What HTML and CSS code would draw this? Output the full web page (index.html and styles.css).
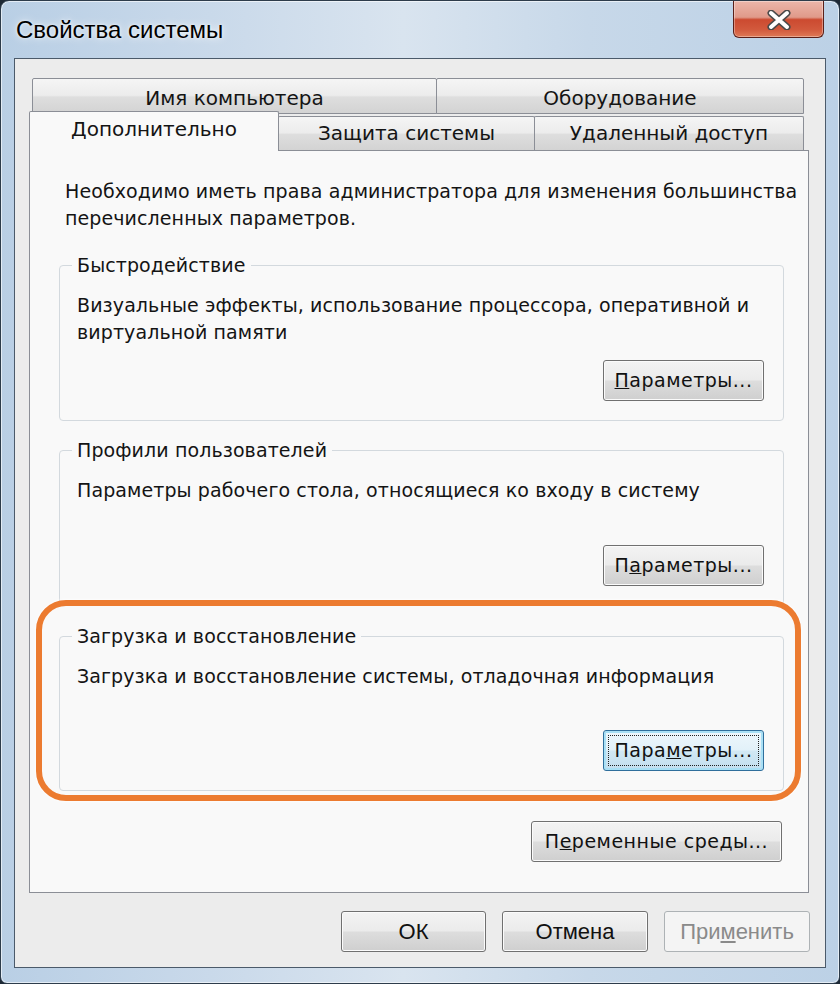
FILE: index.html
```html
<!DOCTYPE html>
<html lang="ru">
<head>
<meta charset="utf-8">
<title>Свойства системы</title>
<link rel="stylesheet" href="styles.css">
</head>
<body>
<div class="window">
  <div class="titlebar">
    <span class="title">Свойства системы</span>
    <div class="close">
      <svg width="24" height="20" viewBox="0 0 24 20">
        <path d="M4 3 L20 17 M20 3 L4 17" stroke="#4a4a4a" stroke-width="7" stroke-linecap="round"/>
        <path d="M4 3 L20 17 M20 3 L4 17" stroke="#ffffff" stroke-width="4" stroke-linecap="round"/>
      </svg>
    </div>
  </div>
  <div class="client">
    <div class="tabrow back">
      <div class="tab t-name">Имя компьютера</div>
      <div class="tab t-hw">Оборудование</div>
    </div>
    <div class="tabrow front">
      <div class="tab sel">Дополнительно</div>
      <div class="tab t-prot">Защита системы</div>
      <div class="tab t-remote">Удаленный доступ</div>
    </div>
    <div class="panel">
      <p class="intro">Необходимо иметь права администратора для изменения большинства<br>перечисленных параметров.</p>
      <div class="group g1">
        <span class="legend">Быстродействие</span>
        <p class="desc">Визуальные эффекты, использование процессора, оперативной и<br>виртуальной памяти</p>
        <div class="btn param"><span><u>П</u>араметры...</span></div>
      </div>
      <div class="group g2">
        <span class="legend">Профили пользователей</span>
        <p class="desc">Параметры рабочего стола, относящиеся ко входу в систему</p>
        <div class="btn param"><span>П<u>а</u>раметры...</span></div>
      </div>
      <div class="group g3">
        <span class="legend">Загрузка и восстановление</span>
        <p class="desc">Загрузка и восстановление системы, отладочная информация</p>
        <div class="btn param focus"><span>Пара<u>м</u>етры...</span></div>
      </div>
      <div class="env-row">
        <div class="btn env"><span>П<u>е</u>ременные среды...</span></div>
      </div>
    </div>
    <div class="actions">
      <div class="btn big ok">ОК</div>
      <div class="btn big cancel">Отмена</div>
      <div class="btn big apply disabled">При<u>м</u>енить</div>
    </div>
  </div>
  <div class="highlight"></div>
</div>
</body>
</html>
```
FILE: styles.css
```css
* { box-sizing: border-box; }
html, body { margin: 0; padding: 0; }
body {
  width: 840px;
  height: 984px;
  overflow: hidden;
  background: #1d2935;
  font-family: "DejaVu Sans", sans-serif;
  color: #141414;
}
p { margin: 0; }

.window {
  position: relative;
  width: 840px;
  height: 984px;
  border: 1px solid #2d3c4b;
  border-radius: 9px 9px 7px 7px;
  background: linear-gradient(90deg, #b9cfe5 0%, #c9d9ea 25%, #d9e4ef 48%, #c7d8e9 70%, #bcd1e6 100%);
  box-shadow: inset 0 0 0 1px rgba(255, 255, 255, 0.6);
  display: flex;
  flex-direction: column;
}

.titlebar {
  height: 57px;
  display: flex;
  align-items: flex-start;
  padding-left: 15px;
  flex: none;
}
.title {
  font-family: "Liberation Sans", sans-serif;
  font-size: 24px;
  line-height: 24px;
  margin-top: 17px;
  color: #000;
  text-shadow: 0 0 8px rgba(255, 255, 255, 0.9), 0 0 3px rgba(255, 255, 255, 0.8);
}
.close {
  margin-left: auto;
  margin-right: 15px;
  width: 91px;
  height: 37px;
  border: 1px solid #5b2019;
  border-top: none;
  border-radius: 0 0 6px 6px;
  background: linear-gradient(180deg, #ecb6aa 0%, #e09a8a 45%, #cc4a30 52%, #d25a3d 80%, #df7a56 100%);
  box-shadow: inset 0 0 0 1px rgba(255, 255, 255, 0.35);
  display: flex;
  align-items: center;
  justify-content: center;
  padding-top: 1px;
}

.client {
  margin: 0 13px;
  height: 910px;
  flex: none;
  border: 1px solid #4b5a6a;
  background: #ececec;
  padding: 19px 15px 0 14px;
  display: flex;
  flex-direction: column;
}

.tabrow { display: flex; flex: none; }
.tabrow.back { margin-left: 3px; height: 36px; }
.tabrow.front { margin-top: -3px; height: 39px; align-items: flex-end; }

.tab {
  border: 1px solid #8b8e96;
  border-radius: 2px 2px 0 0;
  background: linear-gradient(180deg, #f5f5f5 0%, #ececec 48%, #dedede 53%, #d3d3d3 100%);
  font-size: 20px;
  line-height: 24px;
  display: flex;
  align-items: center;
  justify-content: center;
  white-space: nowrap;
}
.back .tab { height: 36px; padding-top: 4px; }
.t-name { width: 405px; }
.t-hw { width: 368px; margin-left: -1px; }
.front .tab { height: 34px; border-bottom: none; padding-bottom: 2px; }
.front .tab.sel {
  width: 250px;
  height: 40px;
  margin-bottom: -1px;
  background: #f9f9f9;
  position: relative;
  z-index: 2;
  padding-bottom: 5px;
}
.t-prot { width: 257px; margin-left: -1px; }
.t-remote { width: 270px; margin-left: -1px; }

.panel {
  width: 780px;
  height: 743px;
  flex: none;
  border: 1px solid #8b8e96;
  background: #f9f9f9;
  padding: 27px 0 0 29px;
}
.intro, .desc, .legend, .btn {
  font-size: 19px;
  line-height: 27px;
  letter-spacing: 0.1px;
  white-space: nowrap;
}
.intro { margin-left: 6px; }

.group {
  width: 725px;
  border: 1px solid #d3d9de;
  border-radius: 4px;
  display: flex;
  flex-direction: column;
  align-items: flex-start;
  padding: 0 19px 19px 17px;
}
.g1 { margin-top: 33px; height: 156px; }
.g2 { margin-top: 29px; height: 156px; }
.g3 { margin-top: 30px; height: 155px; }
.legend {
  margin-top: -14px;
  margin-left: -5px;
  padding: 0 5px;
  background: #f9f9f9;
}
.desc { margin-top: 13px; }

.btn {
  border: 1px solid #707070;
  border-radius: 3px;
  background: linear-gradient(180deg, #f3f3f3 0%, #ebebeb 48%, #dddddd 52%, #cfcfcf 100%);
  box-shadow: inset 0 0 0 1px #fbfbfb;
  display: flex;
  align-items: center;
  justify-content: center;
  color: #111;
  height: 41px;
  letter-spacing: 0.5px;
}
.btn.param { margin-top: auto; align-self: flex-end; width: 161px; }
.btn.focus {
  position: relative;
  border-color: #2f6f9c;
  background: linear-gradient(180deg, #eef7fc 0%, #e2f1f9 48%, #d1e8f4 52%, #c3deee 100%);
  box-shadow: inset 0 0 0 2px #a9e0f5;
}
.btn.focus::after {
  content: "";
  position: absolute;
  left: 4px;
  right: 4px;
  top: 4px;
  bottom: 4px;
  border: 1px dotted #222;
}

.env-row {
  width: 725px;
  margin-top: 30px;
  padding-right: 2px;
  display: flex;
  justify-content: flex-end;
}
.btn.env { width: 251px; }

.actions {
  display: flex;
  justify-content: flex-end;
  gap: 16px;
  margin-top: 18px;
}
.btn.big {
  font-family: "Liberation Sans", sans-serif;
  font-size: 22px;
  letter-spacing: 0;
}
.ok { width: 145px; }
.cancel { width: 146px; }
.apply { width: 146px; }
.btn.disabled {
  border-color: #adb2b5;
  background: #f4f4f4;
  box-shadow: none;
  color: #8a8a8a;
}

.highlight {
  position: absolute;
  left: 35px;
  top: 599px;
  width: 765px;
  height: 201px;
  border: 6px solid #ec7b30;
  border-radius: 30px;
  box-shadow: 0 0 2px 1px rgba(255, 255, 255, 0.7);
  pointer-events: none;
}
```
